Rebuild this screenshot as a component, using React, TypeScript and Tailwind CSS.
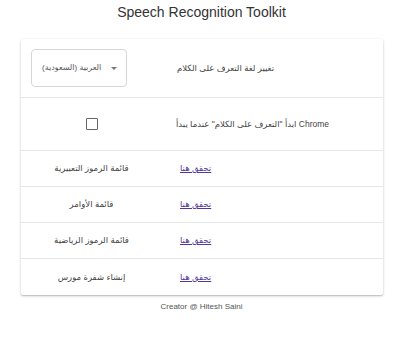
import React from 'react';

const font = { fontFamily: '"Liberation Sans", "DejaVu Sans", sans-serif' };

interface ToolRow {
  label: string;
}

const tools: ToolRow[] = [
  { label: 'قائمة الرموز التعبيرية' },
  { label: 'قائمة الأوامر' },
  { label: 'قائمة الرموز الرياضية' },
  { label: 'إنشاء شفرة مورس' },
];

const App: React.FC = () => {
  return (
    <div className="w-[400px] h-[340px] bg-white" style={font}>
      <h1 className="pt-[2px] h-[39px] text-center text-[14px] leading-[20px] text-[#333] pl-[3px]">
        Speech Recognition Toolkit
      </h1>

      <div className="ml-[21px] w-[362px] bg-white rounded-[2px] shadow-[0_1px_3px_rgba(0,0,0,0.2),0_1px_1px_rgba(0,0,0,0.12)]">
        {/* language */}
        <div className="flex h-[59px] border-b border-[#e6e6e6]">
          <div className="w-[149px] flex items-center pl-[10px]">
            <div className="w-[96px] h-[38px] border border-[#d6d6d6] rounded-[4px] flex items-center justify-between pl-[10px] pr-[9px] text-[8px] text-[#555]">
              <span dir="rtl">العربية (السعودية)</span>
              <svg width="6" height="3" viewBox="0 0 6 3"><path d="M0 0h6L3 3z" fill="#777" /></svg>
            </div>
          </div>
          <div className="flex-1 flex items-center pl-[7px] text-[8.5px] text-[#444]">
            <span dir="rtl">تغيير لغة التعرف على الكلام</span>
          </div>
        </div>

        {/* auto start */}
        <div className="flex h-[53px] border-b border-[#e6e6e6]">
          <div className="w-[149px] flex items-center justify-center pr-[8px]">
            <div className="w-[12px] h-[12px] border-[1.5px] border-[#666] rounded-[1px]" />
          </div>
          <div className="flex-1 flex items-center pl-[6px] text-[8.5px] text-[#444]">
            <span>ابدأ "التعرف على الكلام" عندما يبدأ Chrome</span>
          </div>
        </div>

        {tools.map((t, i) => (
          <div key={i} className={`flex h-[36px] ${i < tools.length - 1 ? 'border-b border-[#e6e6e6]' : ''}`}>
            <div className="w-[149px] flex items-center justify-center pr-[8px] text-[8.5px] text-[#444]">
              <span dir="rtl">{t.label}</span>
            </div>
            <div className="flex-1 flex items-center pl-[10px] text-[8.5px]">
              <a href="#" className="text-[#52389b] underline" dir="rtl">تحقق هنا</a>
            </div>
          </div>
        ))}
      </div>

      <p className="mt-[7px] text-center text-[8px] leading-[10px] text-[#555] pl-[3px]">Creator @ Hitesh Saini</p>
    </div>
  );
};

export default App;
